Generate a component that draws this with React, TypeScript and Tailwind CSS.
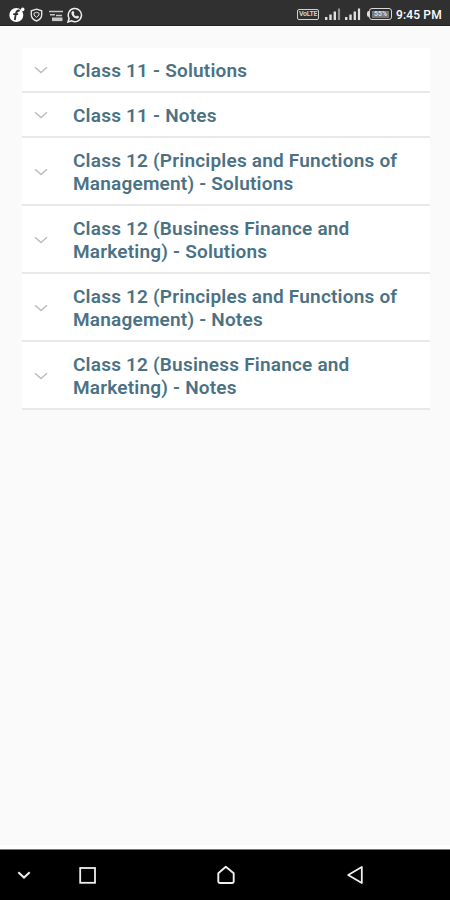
const sections = [
  { id: 1, title: 'Class 11 - Solutions' },
  { id: 2, title: 'Class 11 - Notes' },
  { id: 3, title: 'Class 12 (Principles and Functions of Management) - Solutions' },
  { id: 4, title: 'Class 12 (Business Finance and Marketing) - Solutions' },
  { id: 5, title: 'Class 12 (Principles and Functions of Management) - Notes' },
  { id: 6, title: 'Class 12 (Business Finance and Marketing) - Notes' },
]

function Signal({ last }: { last: string }) {
  return (
    <svg width="16" height="12" viewBox="0 0 16 12" fill="#e0e0e0">
      <rect x="0" y="9" width="2.4" height="3" />
      <rect x="4.3" y="6.5" width="2.4" height="5.5" />
      <rect x="8.6" y="3.5" width="2.4" height="8.5" />
      <rect x="12.9" y="0.5" width="2.2" height="11.5" fill={last} />
    </svg>
  )
}

function StatusBar() {
  return (
    <header className="flex h-[26px] shrink-0 items-center border-b border-[#222] bg-[#303030] pt-[3px] pr-2 pl-[9px] text-white">
      <svg className="mt-px" width="16" height="16" viewBox="0 0 16 16">
        <circle cx="7.3" cy="8" r="7" fill="#fff" />
        <circle cx="13.7" cy="2.4" r="1.8" fill="#fff" />
        <path d="M10.8 3.6C7.8 3.1 7.2 4.8 6.8 7.2L5.8 13M4.2 7.2h5" fill="none" stroke="#303030" strokeWidth="1.8" />
      </svg>
      <svg className="mt-px ml-[5px]" width="13" height="14" viewBox="0 0 13 14" fill="none" stroke="#e4e4e4">
        <path d="M6.5 1.2 11.7 2.8V6.8C11.7 10 9.5 12 6.5 13 3.5 12 1.3 10 1.3 6.8V2.8Z" strokeWidth="1.4" />
        <path d="M4 5.2 6.5 4.3 9 5.2V7L6.5 9.3 4 7Z" strokeWidth="1" />
      </svg>
      <svg className="mt-[3px] ml-[6px]" width="14" height="12" viewBox="0 0 14 12" fill="none" stroke="#c8c8c8">
        <path d="M0 1.5h14" strokeWidth="1.5" />
        <path d="M1 4.8h5M7 5.5h6" strokeWidth="1.5" />
        <path d="M3 9.3h10.5" strokeWidth="3.6" />
      </svg>
      <svg className="mt-px ml-[4px]" width="16" height="16" viewBox="0 0 16 16">
        <path d="M1 15 2.1 11.3A6.6 6.6 0 1 1 4.7 13.9Z" fill="none" stroke="#eee" strokeWidth="1.5" />
        <path d="M5.2 4.2 6.4 4 7.4 6.1 6.7 7.1C7.3 8.2 8 8.9 9.1 9.4L10 8.5 12 9.5C11.9 11 10.8 11.7 9.7 11.5 7 11 4.8 8.7 4.4 6.4 4.3 5.5 4.6 4.7 5.2 4.2Z" fill="#eee" />
      </svg>

      <div className="ml-auto flex items-center">
        <span className="flex h-[11px] w-[22px] items-center justify-center rounded-[2px] border-[1.5px] border-[#d0d0d0] text-[7px] leading-none font-bold tracking-[-0.3px] text-[#ccc]">VoLTE</span>
        <span className="ml-[6px]"><Signal last="#909090" /></span>
        <span className="ml-[4px]"><Signal last="#e0e0e0" /></span>
        <span className="ml-[6px] h-[6px] w-[2px] rounded-l-sm bg-[#e0e0e0]" />
        <span className="flex h-[12px] w-[23px] items-center justify-center rounded-[3px] border-[1.5px] border-[#d8d8d8]">
          <span className="flex h-[7px] w-[17px] items-center justify-center bg-[#777] text-[7px] leading-none font-bold text-[#ddd]">55%</span>
        </span>
        <span className="mt-[2px] ml-[4px] w-[46px] text-[12px] leading-[14px] font-medium tracking-[0.15px] whitespace-nowrap">9:45 PM</span>
      </div>
    </header>
  )
}

function NavBar() {
  return (
    <nav className="flex h-[51px] shrink-0 items-center border-t border-[#777] bg-black pl-[17px] text-[#eee]">
      <svg width="14" height="10" viewBox="0 0 14 10" fill="none" stroke="currentColor" strokeWidth="2">
        <path d="M1.3 2.2 7 7.6 12.7 2.2" />
      </svg>
      <svg className="ml-[48px]" width="17" height="17" viewBox="0 0 17 17" fill="none" stroke="currentColor" strokeWidth="1.8">
        <rect x="1.2" y="1" width="14.8" height="14.8" />
      </svg>
      <svg className="ml-[120px]" width="20" height="20" viewBox="0 0 20 20" fill="none" stroke="currentColor" strokeWidth="1.9" strokeLinejoin="round">
        <path d="M2.3 8.2 9.8 1.7 17.7 8.2V16.6Q17.7 18 16.3 18H3.7Q2.3 18 2.3 16.6Z" />
      </svg>
      <svg className="ml-[110px]" width="18" height="20" viewBox="0 0 18 20" fill="none" stroke="currentColor" strokeWidth="1.8" strokeLinejoin="round">
        <path d="M15.8 2V18L2.2 10Z" />
      </svg>
    </nav>
  )
}

export default function App() {
  return (
    <div className="flex h-screen flex-col overflow-hidden bg-[#fafafa] font-[Roboto,sans-serif]">
      <StatusBar />
      <main className="flex-1 pt-[22px] pr-5 pl-[22px]">
        {sections.map((section) => (
          <button key={section.id} className="flex w-full items-center border-b-2 border-[#e9e9e9] bg-white pt-[11px] pb-[9px] text-left">
            <svg className="-mt-px ml-[12px] shrink-0" width="14" height="8" viewBox="0 0 14 8" fill="none" stroke="#bcbcbc" strokeWidth="1.5">
              <path d="M1 1.3 7 6.5 13 1.3" />
            </svg>
            <span className="ml-[25px] w-[345px] text-[19px] leading-[23px] font-semibold tracking-[0.2px] text-[#4b7284]">{section.title}</span>
          </button>
        ))}
      </main>
      <div className="h-1 shrink-0 bg-white" />
      <NavBar />
    </div>
  )
}
